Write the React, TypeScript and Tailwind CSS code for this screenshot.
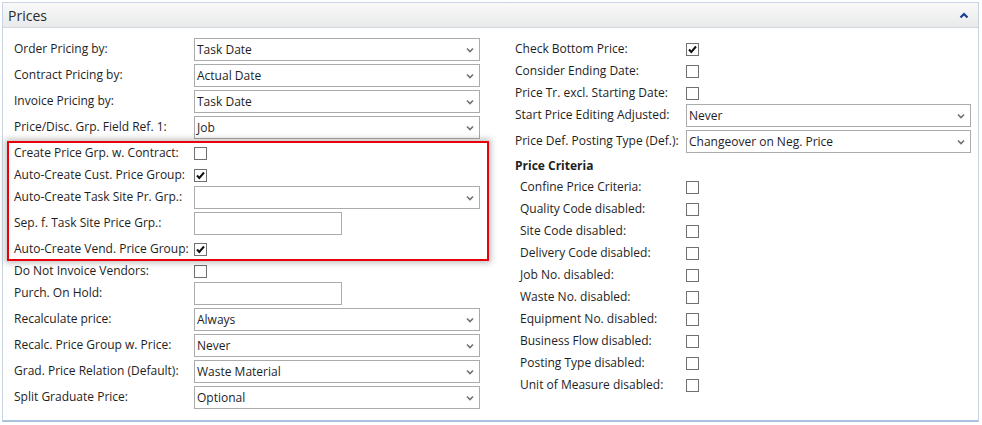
import React from 'react';

type Row =
  | { kind: 'select'; label: string; value: string }
  | { kind: 'check'; label: string; checked?: boolean }
  | { kind: 'text'; label: string };

const FONT = { fontFamily: '"Open Sans", "Noto Sans", sans-serif' };

const TOP: Row[] = [
  { kind: 'select', label: 'Order Pricing by:', value: 'Task Date' },
  { kind: 'select', label: 'Contract Pricing by:', value: 'Actual Date' },
  { kind: 'select', label: 'Invoice Pricing by:', value: 'Task Date' },
  { kind: 'select', label: 'Price/Disc. Grp. Field Ref. 1:', value: 'Job' },
];

const MARKED: Row[] = [
  { kind: 'check', label: 'Create Price Grp. w. Contract:' },
  { kind: 'check', label: 'Auto-Create Cust. Price Group:', checked: true },
  { kind: 'select', label: 'Auto-Create Task Site Pr. Grp.:', value: '' },
  { kind: 'text', label: 'Sep. f. Task Site Price Grp.:' },
  { kind: 'check', label: 'Auto-Create Vend. Price Group:', checked: true },
];

const BOTTOM: Row[] = [
  { kind: 'check', label: 'Do Not Invoice Vendors:' },
  { kind: 'text', label: 'Purch. On Hold:' },
  { kind: 'select', label: 'Recalculate price:', value: 'Always' },
  { kind: 'select', label: 'Recalc. Price Group w. Price:', value: 'Never' },
  { kind: 'select', label: 'Grad. Price Relation (Default):', value: 'Waste Material' },
  { kind: 'select', label: 'Split Graduate Price:', value: 'Optional' },
];

const RIGHT: Row[] = [
  { kind: 'check', label: 'Check Bottom Price:', checked: true },
  { kind: 'check', label: 'Consider Ending Date:' },
  { kind: 'check', label: 'Price Tr. excl. Starting Date:' },
  { kind: 'select', label: 'Start Price Editing Adjusted:', value: 'Never' },
  { kind: 'select', label: 'Price Def. Posting Type (Def.):', value: 'Changeover on Neg. Price' },
];

const CRITERIA = [
  'Confine Price Criteria:',
  'Quality Code disabled:',
  'Site Code disabled:',
  'Delivery Code disabled:',
  'Job No. disabled:',
  'Waste No. disabled:',
  'Equipment No. disabled:',
  'Business Flow disabled:',
  'Posting Type disabled:',
  'Unit of Measure disabled:',
];

function Chevron() {
  return (
    <svg width="8" height="6" viewBox="0 0 8 6" className="shrink-0">
      <path d="M1 1.5 L4 4.5 L7 1.5" fill="none" stroke="#707070" strokeWidth="1.6" />
    </svg>
  );
}

function Checkbox({ checked }: { checked?: boolean }) {
  return (
    <div className="w-[13px] h-[13px] border border-[#707070] bg-white flex items-center justify-center">
      {checked && (
        <svg width="11" height="11" viewBox="0 0 11 11">
          <path d="M2 5.5 L4.3 8 L9 2.5" fill="none" stroke="#111" strokeWidth="2" />
        </svg>
      )}
    </div>
  );
}

function Field({ row, labelW }: { row: Row; labelW: string }) {
  if (row.kind === 'check') {
    return (
      <div className="h-[22px] flex items-center">
        <div className={`${labelW} shrink-0 text-[12px] text-[#1e1e1e]`}>{row.label}</div>
        <Checkbox checked={row.checked} />
      </div>
    );
  }
  if (row.kind === 'text') {
    return (
      <div className="h-[26px] flex items-start">
        <div className={`${labelW} shrink-0 h-[22px] flex items-center text-[12px] text-[#1e1e1e]`}>{row.label}</div>
        <div className="w-[148px] h-[23px] border border-[#ababab] bg-white" />
      </div>
    );
  }
  return (
    <div className="h-[26px] flex items-start">
      <div className={`${labelW} shrink-0 h-[22px] flex items-center text-[12px] text-[#1e1e1e]`}>{row.label}</div>
      <div className="flex-1 h-[23px] border border-[#ababab] bg-white flex items-center justify-between pl-[2px] pr-[5px] text-[12px] text-[#1e1e1e]">
        <span>{row.value}</span>
        <Chevron />
      </div>
    </div>
  );
}

export default function App() {
  return (
    <div className="w-[982px] h-[425px] bg-white pt-[2px] pl-[2px]" style={FONT}>
      <div className="w-[977px] h-[420px] border border-[#c9d4e2] border-b-2 border-b-[#a9c2e0] flex flex-col">
        <div className="h-[25px] shrink-0 bg-gradient-to-b from-[#f9f9f9] to-[#e9eaeb] border-b border-[#d4d6d8] flex items-center justify-between pl-[5px] pr-[9px]">
          <span className="text-[14px] text-[#2a2a2a]">Prices</span>
          <svg width="10" height="7" viewBox="0 0 10 7">
            <path d="M1.5 5.5 L5 2 L8.5 5.5" fill="none" stroke="#1b3f94" strokeWidth="2.2" />
          </svg>
        </div>
        <div className="flex pt-[10px] pl-[11px]">
          <div className="w-[466px] flex flex-col">
            {TOP.map((r) => (
              <Field key={r.label} row={r} labelW="w-[180px]" />
            ))}
            <div className="relative flex flex-col">
              <div className="absolute -top-[1px] -left-[7px] -right-[9px] -bottom-[1px] border-2 border-[#e8000b] shadow-[0_0_6px_2px_rgba(0,0,0,0.25)] pointer-events-none" />
              {MARKED.map((r) => (
                <Field key={r.label} row={r} labelW="w-[180px]" />
              ))}
            </div>
            {BOTTOM.map((r) => (
              <Field key={r.label} row={r} labelW="w-[180px]" />
            ))}
          </div>
          <div className="w-[456px] ml-[35px] flex flex-col">
            {RIGHT.map((r) => (
              <Field key={r.label} row={r} labelW="w-[171px]" />
            ))}
            <div className="h-[20px] flex items-center text-[12px] font-bold text-[#1e1e1e]">Price Criteria</div>
            <div className="pl-[5px] flex flex-col">
              {CRITERIA.map((c) => (
                <Field key={c} row={{ kind: 'check', label: c }} labelW="w-[166px]" />
              ))}
            </div>
          </div>
        </div>
      </div>
    </div>
  );
}
